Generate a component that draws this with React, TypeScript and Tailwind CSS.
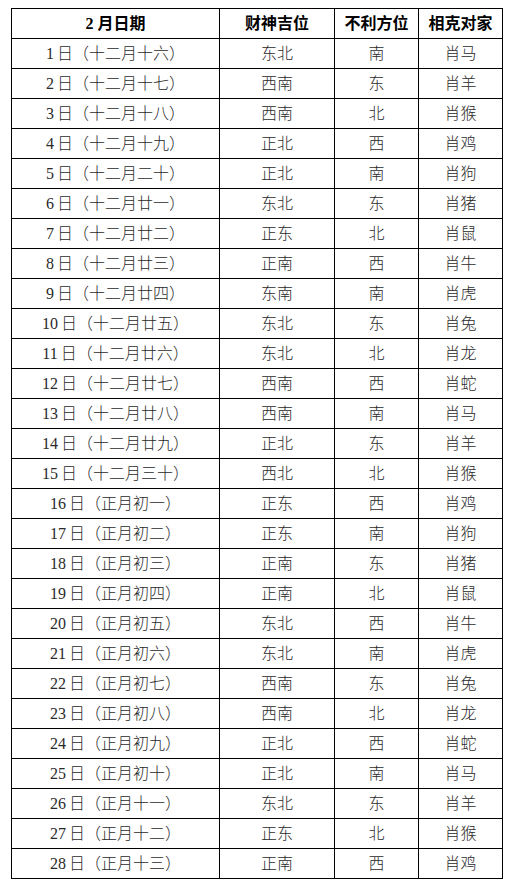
const rows: [string, string, string, string, string][] = [
  ["1", "十二月十六", "东北", "南", "肖马"],
  ["2", "十二月十七", "西南", "东", "肖羊"],
  ["3", "十二月十八", "西南", "北", "肖猴"],
  ["4", "十二月十九", "正北", "西", "肖鸡"],
  ["5", "十二月二十", "正北", "南", "肖狗"],
  ["6", "十二月廿一", "东北", "东", "肖猪"],
  ["7", "十二月廿二", "正东", "北", "肖鼠"],
  ["8", "十二月廿三", "正南", "西", "肖牛"],
  ["9", "十二月廿四", "东南", "南", "肖虎"],
  ["10", "十二月廿五", "东北", "东", "肖兔"],
  ["11", "十二月廿六", "东北", "北", "肖龙"],
  ["12", "十二月廿七", "西南", "西", "肖蛇"],
  ["13", "十二月廿八", "西南", "南", "肖马"],
  ["14", "十二月廿九", "正北", "东", "肖羊"],
  ["15", "十二月三十", "西北", "北", "肖猴"],
  ["16", "正月初一", "正东", "西", "肖鸡"],
  ["17", "正月初二", "正东", "南", "肖狗"],
  ["18", "正月初三", "正南", "东", "肖猪"],
  ["19", "正月初四", "正南", "北", "肖鼠"],
  ["20", "正月初五", "东北", "西", "肖牛"],
  ["21", "正月初六", "东北", "南", "肖虎"],
  ["22", "正月初七", "西南", "东", "肖兔"],
  ["23", "正月初八", "西南", "北", "肖龙"],
  ["24", "正月初九", "正北", "西", "肖蛇"],
  ["25", "正月初十", "正北", "南", "肖马"],
  ["26", "正月十一", "东北", "东", "肖羊"],
  ["27", "正月十二", "正东", "北", "肖猴"],
  ["28", "正月十三", "正南", "西", "肖鸡"],
];

const cell = "border border-black h-[30px] p-0 text-center align-middle";

export default function App() {
  return (
    <div className="min-h-screen bg-white pt-[8px] pl-[11px]">
      <table
        className="table-fixed border-collapse w-[491px] text-[16px] leading-none text-[#2a2a2a]"
        style={{ fontFamily: '"Liberation Serif", "Noto Sans CJK SC", serif' }}
      >
        <colgroup>
          <col className="w-[208px]" />
          <col className="w-[115px]" />
          <col className="w-[84px]" />
          <col className="w-[84px]" />
        </colgroup>
        <thead>
          <tr>
            <th className={`${cell} font-bold text-black`}>2 月日期</th>
            <th className={`${cell} font-bold text-black`}>财神吉位</th>
            <th className={`${cell} font-bold text-black`}>不利方位</th>
            <th className={`${cell} font-bold text-black`}>相克对家</th>
          </tr>
        </thead>
        <tbody>
          {rows.map(([d, lunar, god, bad, zodiac]) => (
            <tr key={d}>
              <td className={cell}>
                {d}
                <span className="ml-[3px] font-light">日（{lunar}）</span>
              </td>
              <td className={`${cell} font-light`}>{god}</td>
              <td className={`${cell} font-light`}>{bad}</td>
              <td className={`${cell} font-light`}>{zodiac}</td>
            </tr>
          ))}
        </tbody>
      </table>
    </div>
  );
}
